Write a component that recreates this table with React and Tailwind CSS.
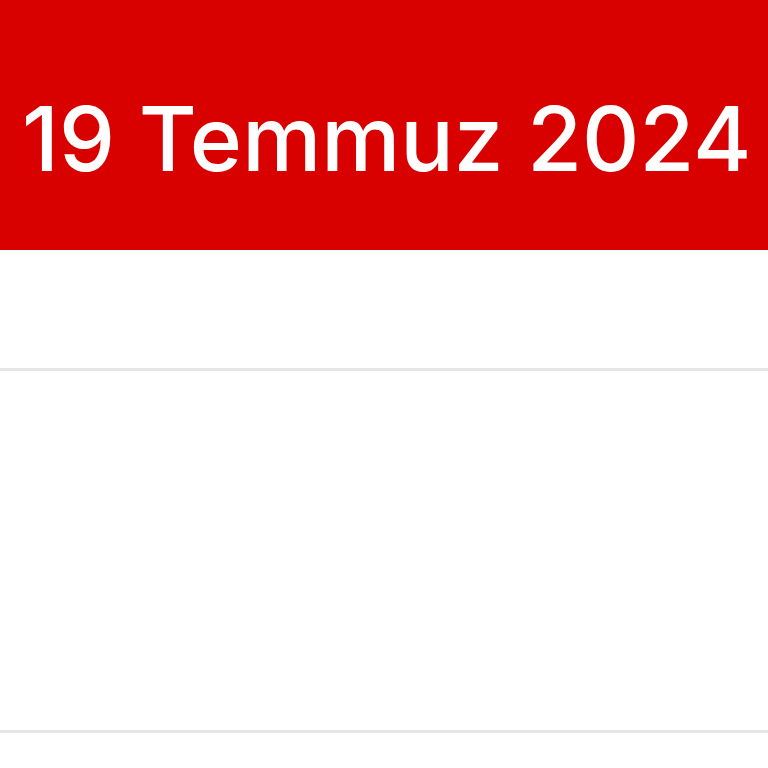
import React from "react";

const App = () => {
  return (
    <div className="w-[768px] h-[768px] overflow-hidden bg-white font-['Inter','Liberation_Sans',Arial,sans-serif]">
      {/* Header */}
      <div className="h-[250px] bg-[#d90000] flex items-start pt-[89px] pl-[22px]">
        <h1 className="text-[89px] leading-[100px] font-medium text-white tracking-[0px] whitespace-nowrap">
          19 Temmuz 2024
        </h1>
      </div>

      {/* Rows */}
      <div className="h-[121px] border-b-[3px] border-[#e6e6e6]"></div>
      <div className="h-[359px] border-b-[3px] border-[#e6e6e6] mt-[3px]"></div>
    </div>
  );
};

export default App;
